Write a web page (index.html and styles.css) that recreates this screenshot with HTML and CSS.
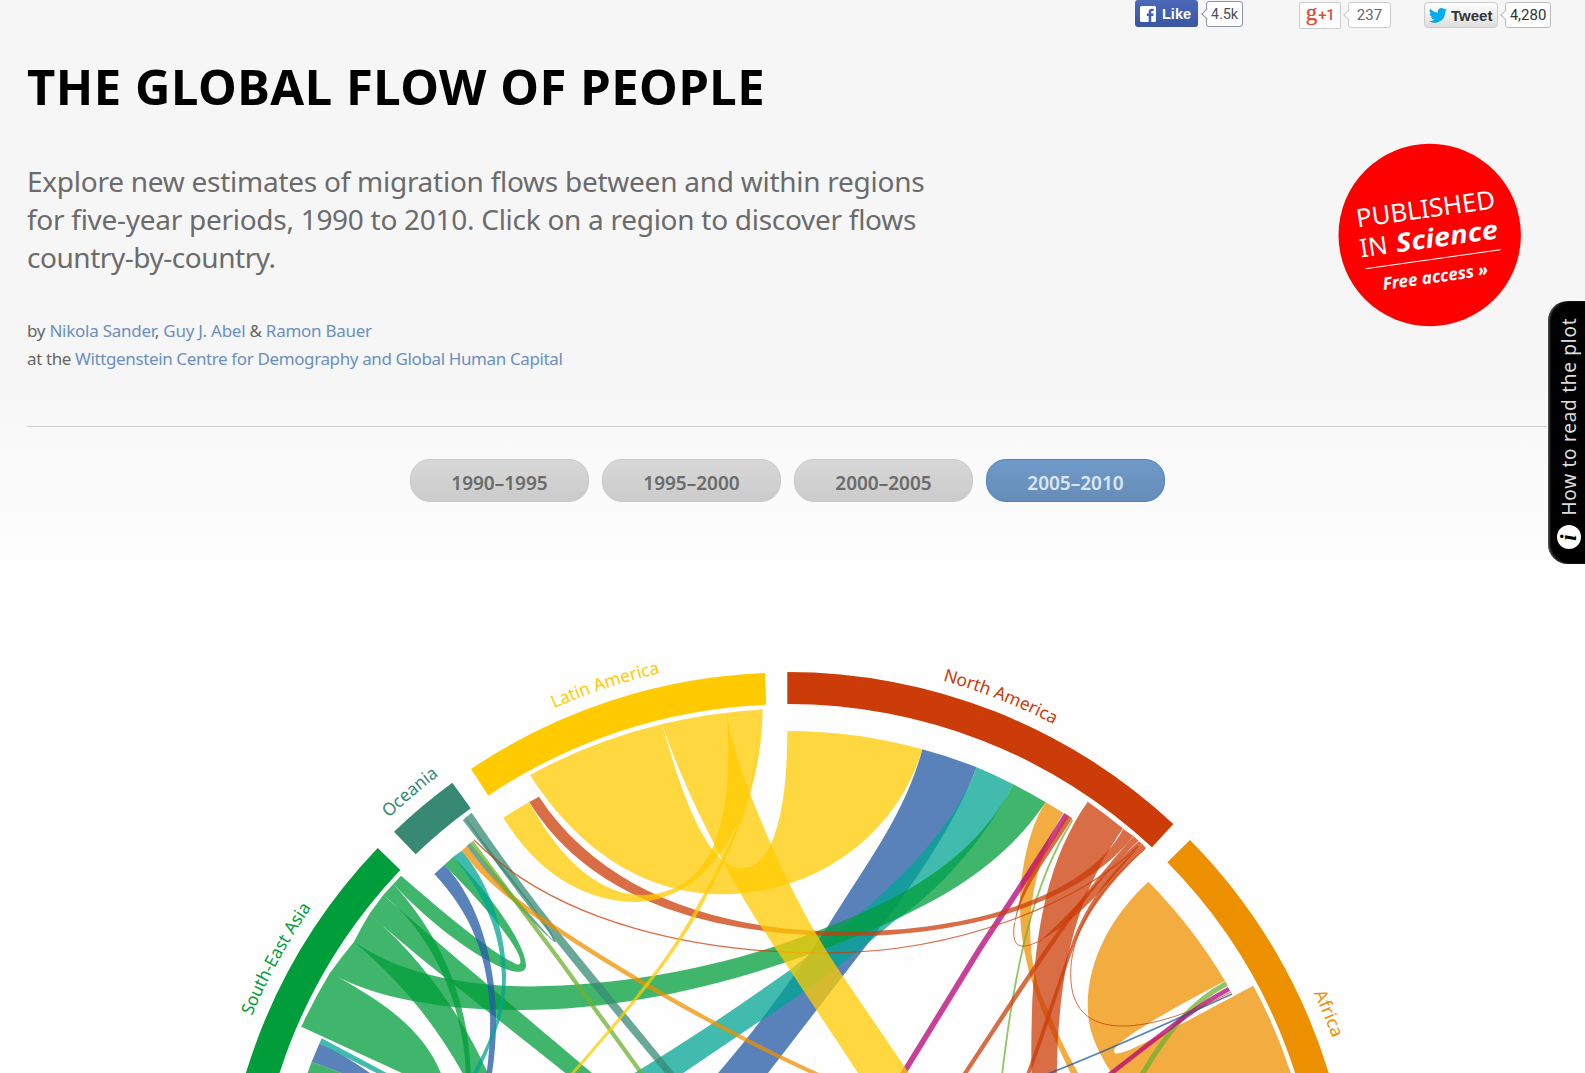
FILE: index.html
```html
<!DOCTYPE html>
<html lang="en">
<head>
<meta charset="utf-8">
<title>The Global Flow of People</title>
<link rel="stylesheet" href="styles.css">
</head>
<body>
<div class="page">
  <div class="social">
    <div class="share share-fb">
      <a class="fb-btn"><svg width="16" height="16" viewBox="0 0 16 16"><rect width="16" height="16" rx="1.5" fill="#fff"/><path d="M8.6 16V10H6.8V7.6h1.8V6c0-2.2 1.2-3.3 3.1-3.3h2v2.3h-1.3c-.9 0-1.1.4-1.1 1.1v1.5h2.4L13.3 10h-2v6z" fill="#4560ae"/></svg><span>Like</span></a>
      <span class="count count-fb">4.5k</span>
    </div>
    <div class="share share-gp">
      <a class="gp-btn"><span class="gp-g">g</span><span class="gp-one">+1</span></a>
      <span class="count count-gp">237</span>
    </div>
    <div class="share share-tw">
      <a class="tw-btn"><svg width="18" height="15" viewBox="0 0 24 20"><path fill="#00aced" d="M24 2.4a10 10 0 0 1-2.8.8A5 5 0 0 0 23.300.5a10 10 0 0 1-3.100 1.200A4.900 4.900 0 0 0 11.800 6.200 14 14 0 0 1 1.700 1 4.900 4.900 0 0 0 3.200 7.600a5 5 0 0 1-2.200-.6 4.900 4.900 0 0 0 3.900 4.900 5 5 0 0 1-2.200.1 4.900 4.900 0 0 0 4.600 3.400A9.900 9.900 0 0 1 0 17.500 14 14 0 0 0 21.500 5.000 10 10 0 0 0 24 2.400z"/></svg><span>Tweet</span></a>
      <span class="count count-tw">4,280</span>
    </div>
  </div>

  <header class="intro">
    <div class="copy">
      <h1>THE GLOBAL FLOW OF PEOPLE</h1>
      <p class="lead"><span class="l1">Explore new estimates of migration flows between and within regions</span><br><span class="l2">for five-year periods, 1990 to 2010. Click on a region to discover flows</span><br><span class="l3">country-by-country.</span></p>
      <p class="byline"><span class="b1">by <a>Nikola Sander</a>, <a>Guy J. Abel</a> &amp; <a>Ramon Bauer</a></span><br><span class="b2">at the <a>Wittgenstein Centre for Demography and Global Human Capital</a></span></p>
    </div>
    <svg class="badge" width="184" height="184" viewBox="1338 143 184 184">
      <circle cx="1429.700" cy="235" r="91.200" fill="#f00"/>
      <g fill="#fff">
        <text class="bd" font-size="25.500" textLength="140" lengthAdjust="spacingAndGlyphs" transform="translate(1357.500 227.500) rotate(-8)">PUBLISHED</text>
        <text class="bd" font-size="25.500" textLength="28" lengthAdjust="spacingAndGlyphs" transform="translate(1361 257.500) rotate(-8)">IN</text>
        <text class="bd bi" font-size="26" textLength="103" lengthAdjust="spacingAndGlyphs" transform="translate(1397 252.500) rotate(-8)">Science</text>
        <text class="bd bi" font-size="17" textLength="106" lengthAdjust="spacingAndGlyphs" transform="translate(1383.500 290) rotate(-8)">Free access »</text>
      </g>
      <path d="M1365.700 268.700L1500.700 249.700" stroke="#fff" stroke-width="1"/>
    </svg>
  </header>

  <nav class="periods">
    <a>1990–1995</a><a>1995–2000</a><a>2000–2005</a><a class="on">2005–2010</a>
  </nav>

  <svg class="chart" width="1585" height="513" viewBox="0 560 1585 513">
    <defs>
      <path id="arc-la" d="M554 708.300A578 578 0 0 1 1365.300 1238"/>
      <path id="arc-na" d="M942.700 680.500A578 578 0 0 1 1365.300 1238"/>
      <path id="arc-oc" d="M388.800 818A578 578 0 0 1 1365.300 1238"/>
      <path id="arc-se" d="M252 1016A580 580 0 0 1 1367.300 1238"/>
      <path id="arc-af" d="M1313.800 993A581 581 0 0 1 1368.300 1238"/>
    </defs>

    <!-- region arcs -->
    <path fill="#cb3c08" d="M787.300 672A566 566 0 0 1 1173.300 824L1152 847.300A534 534 0 0 0 787.300 704Z"/>
    <path fill="#ffcb00" d="M765 673L766 704.800A534 534 0 0 0 488.300 795.700L471 769A566 566 0 0 1 765 673Z"/>
    <path fill="#378974" d="M394 831.700A566 566 0 0 1 452.300 782.700L470.700 808.300A534 534 0 0 0 415.700 854.300Z"/>
    <path fill="#009e3b" d="M377.700 848L400.300 870A534 534 0 0 0 277.300 1080L243.800 1080A566 566 0 0 1 377.700 848Z"/>
    <path fill="#ed9000" d="M1190 840A566 566 0 0 1 1330.800 1080H1297.300A534 534 0 0 0 1167.300 862.300Z"/>

    <!-- flows -->
    <g class="flow blue"><path d="M922.300 749.300A507 507 0 0 1 976.700 767.300C950 835 905 895 873 937L758 1086H707C760 1025 795 975 826.700 928C865 865 905 815 922.300 749.300Z"/></g>
    <g class="flow teal"><path d="M976.700 767.300A507 507 0 0 1 1013.300 784.300C985 840 935 895 893 922C850 960 790 1003 757 1023L664 1086H613C690 1040 740 1005 790 970C860 915 945 850 976.700 767.300Z"/></g>
    <g class="flow green">
      <path d="M1013.300 784.300A507 507 0 0 1 1045.700 802.300C1005 862 950 895 888 923C780 970 650 1010 520 1010C430 1010 370 995 330 973A530 530 0 0 1 354 941.700C400 975 470 986 530 986.500C640 985 740 962 820 930C900 900 975 860 1013.300 784.300Z"/>
      <path d="M401 875.700C435 905 488 951 517 964.500C527 966 519 940 444.300 865L453.300 856.700C490 893 526 945 526 966C524 988 450 945 393.300 884Z"/>
      <path d="M393.300 884C440 935 471 1000 471 1085H466C467 1020 440 940 383.300 895Z"/>
      <path d="M383.300 895C440 945 520 1012 605 1084H579C500 1020 420 960 369.300 914Z"/>
      <path d="M369.300 914C430 965 470 1030 493 1085H469C440 1030 405 985 354 941.700A530 530 0 0 1 369.300 914Z"/>
      <path d="M330 972.700C390 1005 430 1035 445 1085H428L301.300 1026.700A530 530 0 0 1 330 972.700Z"/>
      <path d="M311.700 1061.700L341.700 1073L360 1080H305Z"/>
    </g>
    <g class="flow teal"><path d="M321.700 1038.300L386.700 1073V1080H392L376.700 1073L319.300 1043.700Z"/></g>
    <g class="flow blue">
      <path d="M319.300 1043.700Q345 1055 370 1073L380 1080H360L341.700 1073L311.700 1061.700Z"/>
      <path d="M434.300 874L444.300 865C480 900 509 985 490 1085H485C500 985 482 925 434.300 874Z"/>
    </g>
    <g class="flow teal"><path d="M453.300 856.700L461.700 850.700C500 895 522 980 492 1040C487 1055 480 1068 473 1082H468C485 1050 502 1020 502 980C502 935 485 895 453.300 856.700Z"/></g>
    <g class="flow sea">
      <path d="M465 818L471.700 812.700C500 855 535 903 572 948L684 1085H675C600 995 530 915 465 818Z"/>
      <path d="M462.700 820L466 818C500 865 550 925 556 942C557 948 490 880 466.700 846L470 843C500 880 550 938 553 940C545 918 500 870 462.700 820Z"/>
    </g>
    <g class="flow orange">
      <path d="M461.700 850.500L467 846C492 883 530 909 561 929C641 982 740 1038 830 1078L829 1082C739 1042 639 986 559 933C529 914 488 887 461.700 850.500Z"/>
      <path d="M1045.700 802.300L1063.300 812.700C1020 885 1024 965 1048 1010C1060 1040 1068 1055 1083 1082H1075C1040 1010 1020 965 1020 905C1020 870 1030 825 1045.700 802.300Z"/>
      <path d="M1148.300 881.700A507 507 0 0 1 1225 981C1180 1004 1110 1043 1114 1052C1117 1060 1160 1035 1253.300 985.700A530 530 0 0 1 1293 1080H1116C1095 1048 1087.700 1030 1087.700 1005C1087.700 960 1112 915 1148.300 881.700Z"/>
    </g>
    <g class="flow lime">
      <path class="line" stroke-width="4.200" d="M471.500 842C500 880 530 920 561 962L650 1085"/>
      <path class="line" stroke-width="1.800" d="M1072.500 820C1035 880 1015 960 1001.500 1080"/>
      <path class="line" stroke-width="5" d="M1226.500 983.500C1190 1003 1165 1035 1140 1078"/>
    </g>
    <g class="flow magenta">
      <path class="line" stroke-width="5.600" d="M1066.500 814.500C1045 850 1003 913 979 950L898 1082"/>
      <path class="line" stroke-width="4.500" d="M1229 989C1190 1010 1165 1032 1105 1078"/>
    </g>
    <g class="flow red">
      <path d="M539 796.700C600 890 715 931.500 845 931.500C980 931.500 1090 892 1123.300 829L1133.300 836C1080 905 960 936 850 936C710 936 590 900 529.300 802Z"/>
      <path class="line" stroke-width="1.300" d="M474 840C560 925 700 953 825 953C960 953 1085 900 1138 846"/>
      <path d="M1087.700 801.700A530 530 0 0 1 1123 828.500C1080 890 1057 960 1056.700 1085H1031.700C1029 960 1040 870 1087.700 801.700Z"/>
      <path d="M955 1085L1010 1001C1048 943 1085 890 1133.600 836.200L1138.600 840.800C1092 883 1052 947 1014 1003L960 1085Z"/>
      <path d="M1022 1085C1043 1030 1058 980 1070.500 947C1083 910 1105 877 1142 843.800L1146 848C1112 880 1087 911 1073.500 948C1061 982 1047 1030 1026 1085Z"/>
      <path class="line" stroke-width="1" d="M1145 849C1090 895 1070 940 1070.700 975C1071 1055 1170 1025 1231 992"/>
      <path class="line" stroke-width="1" d="M1014.500 923C1010 953 1025 948 1042 940"/>
      <path d="M1067 815L1072.300 818.300C1045 862 1022 888 1014.500 925C1018 885 1045 855 1067 815Z"/>
      <path d="M1139 841.200L1141.800 843.600C1110 880 1085 915 1040 941C1080 905 1105 870 1139 841.200Z"/>
    </g>
    <g class="flow blue"><path class="line" stroke-width="1.700" d="M1232 994C1170 1022 1110 1050 1040 1077"/></g>
    <g class="flow yellow">
      <path d="M530 775A530 530 0 0 1 662.300 724C676 775 704 868.300 741.700 868.300C772 868.300 787.300 815 787.300 731A507 507 0 0 1 922.300 749.300C895 840 810 894.300 723.300 894.300C640 894.300 575 845 530 775Z"/>
      <path d="M662.300 724A530 530 0 0 1 726.700 712.700C733 760 770 845 790 885C806 917 820 942 843.300 976.700L917 1085H866L762 928C738 893 683 790 662.300 724Z"/>
      <path d="M726.700 712.700C732 790 728 893 642 895C600 895 560 860 529.300 802A507 507 0 0 0 503.300 817.700C540 878 590 902 635 902C715 902 764 800 758.700 709.700A530 530 0 0 0 726.700 712.700Z"/>
      <path d="M758.700 709.700L762.700 709C762 790 729 856 699 911C672 959 637 1002 568 1081L564 1081C634 1001 668 959 695 910C724 858 762 790 758.700 709.700Z"/>
    </g>

    <!-- region labels -->
    <g class="labels">
      <text fill="#ffcb00"><textPath href="#arc-la" textLength="112" lengthAdjust="spacingAndGlyphs">Latin America</textPath></text>
      <text fill="#cb3c08"><textPath href="#arc-na" textLength="120" lengthAdjust="spacingAndGlyphs">North America</textPath></text>
      <text fill="#378974"><textPath href="#arc-oc" textLength="66" lengthAdjust="spacingAndGlyphs">Oceania</textPath></text>
      <text fill="#009e3b"><textPath href="#arc-se" textLength="124" lengthAdjust="spacingAndGlyphs">South-East Asia</textPath></text>
      <text fill="#ed9000"><textPath href="#arc-af" textLength="49" lengthAdjust="spacingAndGlyphs">Africa</textPath></text>
    </g>
  </svg>

  <a class="howto">
    <svg width="37" height="263" viewBox="0 0 37 263">
      <text class="howto-text" textLength="197" transform="translate(28 214.500) rotate(-90)">How to read the plot</text>
      <circle cx="21" cy="236" r="12" fill="#fff"/>
      <text class="howto-i" transform="translate(28 239.800) rotate(-90)">i</text>
    </svg>
  </a>
</div>
</body>
</html>
```
FILE: styles.css
```css
* { box-sizing: border-box; }
body {
  margin: 0;
  font-family: "Noto Sans", "Open Sans", sans-serif;
  color: #666;
  background: #fefefe;
}
.page {
  position: relative;
  width: 1585px;
  height: 1073px;
  overflow: hidden;
  background: linear-gradient(#f6f6f6 0, #f6f6f6 360px, #fefefe 570px);
}

/* share buttons */
.social {
  display: flex;
  justify-content: flex-end;
  align-items: flex-start;
  gap: 56px;
  height: 56px;
  padding-right: 34px;
}
.share { display: flex; font-family: "Liberation Sans", sans-serif; }
.share-fb { gap: 8px; }
.share-gp { gap: 7px; padding-top: 2px; }
.share-tw { gap: 7px; padding-top: 2px; margin-left: -23px; }
.fb-btn {
  display: flex;
  align-items: center;
  gap: 6px;
  width: 63px;
  height: 27px;
  padding-left: 5px;
  border-radius: 3px;
  background: linear-gradient(#4c69ba, #3b55a0);
  color: #fff;
  font: bold 14.5px "Liberation Sans", sans-serif;
}
.count {
  position: relative;
  height: 26px;
  border: 1px solid #bbb;
  border-radius: 3px;
  background: #fff;
  text-align: center;
  font: 15px/25px Roboto, sans-serif;
}
.count::before {
  content: "";
  position: absolute;
  left: -4.500px;
  top: 8px;
  width: 7px;
  height: 7px;
  border-left: 1px solid #bbb;
  border-bottom: 1px solid #bbb;
  background: #fff;
  transform: rotate(45deg);
}
.count-fb { width: 37px; margin-top: 1px; border-color: #8b93a5; font-size: 14.5px; color: #4b4f56; }
.count-fb::before { border-color: #8b93a5; }
.count-gp { width: 43px; color: #666; border-color: #ccc; }
.count-gp::before { border-color: #ccc; }
.count-tw { width: 46px; color: #333; }
.gp-btn {
  display: flex;
  justify-content: center;
  align-items: center;
  width: 42px;
  height: 27px;
  border: 1px solid #ccc;
  border-radius: 2px;
  background: #fff;
  color: #dd4b39;
}
.gp-g { font: 23px/22px "Liberation Serif", serif; -webkit-text-stroke: .4px #dd4b39; padding-bottom: 6px; }
.gp-one { font: 500 15px Roboto, sans-serif; letter-spacing: -.5px; padding: 0 0 2px 1px; }
.tw-btn {
  display: flex;
  align-items: center;
  gap: 4px;
  width: 74px;
  height: 26px;
  padding-left: 4px;
  border: 1px solid #ccc;
  border-radius: 4px;
  background: linear-gradient(#fff, #dedede);
  color: #333;
  font: bold 15px "Liberation Sans", sans-serif;
}

/* intro */
.intro {
  display: flex;
  justify-content: space-between;
  width: 1520px;
  height: 371px;
  margin-left: 27px;
  border-bottom: 1px solid #ccc;
  box-shadow: 0 1px 0 #fff;
}
.copy { white-space: nowrap; }
h1 {
  margin: 0;
  font-size: 49px;
  line-height: 60px;
  font-weight: 700;
  letter-spacing: .52px;
  color: #000;
}
.lead {
  margin: 46px 0 0;
  font-size: 28px;
  line-height: 38px;
  color: #6b6b6b;
}
.l1 { letter-spacing: -.26px; }
.l2 { letter-spacing: -.28px; }
.l3 { letter-spacing: -.46px; }
.byline {
  margin: 41px 0 0;
  font-size: 17px;
  line-height: 28px;
}
.b1 { letter-spacing: -.26px; }
.b2 { letter-spacing: -.38px; }
.byline a { color: #6a8fc0; }
.badge { flex: none; margin: 87px 25px 0 0; }
.bd { font-family: "Noto Sans", sans-serif; }
.bi { font-weight: 700; font-style: italic; }

/* period switch */
.periods {
  display: flex;
  justify-content: center;
  gap: 13px;
  height: 133px;
  padding: 32px 10px 0 0;
}
.periods a {
  width: 179px;
  height: 43px;
  border: 1px solid #c8c8c8;
  border-radius: 20px;
  background: linear-gradient(#d8d8d8, #cbcbcb);
  color: #6b6b6b;
  font-size: 19px;
  font-weight: 600;
  line-height: 47px;
  text-align: center;
}
.periods .on {
  border-color: #4a84c4;
  background: linear-gradient(#6f9ac8, #678cb8);
  color: #dbe6f3;
}

/* chord diagram */
.chart { display: block; }
.flow { --c: #000; }
.flow path { fill: var(--c); opacity: .75; }
.flow .line { fill: none; stroke: var(--c); }
.blue { --c: #2158a4; }
.teal { --c: #00a491; }
.green { --c: #009e3b; }
.sea { --c: #378974; }
.orange { --c: #ed9000; }
.lime { --c: #6eb030; }
.magenta { --c: #b70076; }
.red { --c: #cb3c08; }
.yellow { --c: #ffcb00; }
.labels { font-size: 17.5px; }

/* help tab, over the page edge */
.howto {
  position: absolute;
  right: 0;
  top: 301px;
  width: 37px;
  height: 263px;
  border-radius: 20px 0 0 20px;
  background: #000;
  box-shadow: inset 2px 0 3px -1px #777;
}
.howto svg { display: block; }
.howto-text { font-size: 19px; fill: #ddd; }
.howto-i { font: italic bold 23px "Liberation Serif", serif; fill: #000; }
```
